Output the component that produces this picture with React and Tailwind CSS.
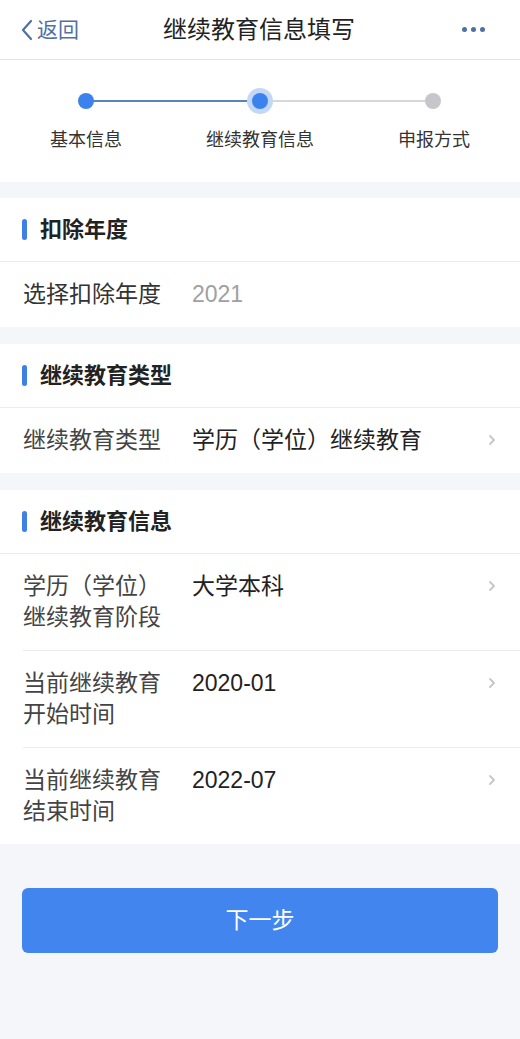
import React from 'react'

const FONT = { fontFamily: '"Liberation Sans", "Noto Sans CJK SC", sans-serif' }

function Chevron() {
  return (
    <svg width="8" height="12" viewBox="0 0 8 12" className="shrink-0">
      <path d="M2 2l4 4-4 4" fill="none" stroke="#c4c6ca" strokeWidth="1.8" strokeLinecap="round" strokeLinejoin="round" />
    </svg>
  )
}

function SectionHeader({ title }) {
  return (
    <div className="h-[64px] flex items-center pl-[22px] border-b border-[#ececee]">
      <span className="w-[5px] h-[21px] rounded-full bg-[#3f7fe6] mr-[13px]" />
      <span className="text-[22px] font-bold text-[#222]">{title}</span>
    </div>
  )
}

function Row({ label, value, valueClass = 'text-[#222]', arrow, divider, labelClass = 'text-[#444]' }) {
  return (
    <div className="pl-[23px]">
      <div className={`flex items-start w-full pr-[24px] py-[17px] ${divider ? 'border-t border-[#ececee]' : ''}`}>
        <div className={`w-[150px] shrink-0 text-[23px] leading-[31px] ${labelClass}`}>{label}</div>
        <div className={`ml-[19px] flex-1 text-[23px] leading-[31px] ${valueClass}`}>{value}</div>
        {arrow && (
          <div className="h-[31px] flex items-center -mt-[1px]">
            <Chevron />
          </div>
        )}
      </div>
    </div>
  )
}

function Stepper() {
  return (
    <div className="bg-white h-[122px] flex flex-col">
      <div className="relative h-[68px]">
        <div className="absolute top-[40px] left-[86px] w-[174px] h-[2px] bg-[#5d82b8]" />
        <div className="absolute top-[40px] left-[260px] w-[173px] h-[2px] bg-[#d6d7da]" />
        <div className="absolute top-[33px] left-[78px] w-[16px] h-[16px] rounded-full bg-[#3c82ee]" />
        <div className="absolute top-[28px] left-[247px] w-[26px] h-[26px] rounded-full bg-[#c3d8f6] flex items-center justify-center">
          <div className="w-[16px] h-[16px] rounded-full bg-[#3c82ee]" />
        </div>
        <div className="absolute top-[33px] left-[425px] w-[16px] h-[16px] rounded-full bg-[#c6c6cb]" />
      </div>
      <div className="grid grid-cols-[140px_140px_140px] gap-x-[34px] pl-[16px] text-[18px] text-[#333] leading-[24px]">
        <div className="text-center">基本信息</div>
        <div className="text-center">继续教育信息</div>
        <div className="text-center">申报方式</div>
      </div>
    </div>
  )
}

export default function App() {
  return (
    <div style={FONT} className="w-[520px] min-h-[1039px] bg-[#f4f6f9] flex flex-col">
      <div className="bg-white h-[60px] flex items-center px-[20px] border-b border-[#e3e4e6]">
        <div className="flex items-center w-[100px] text-[#4f70a6] text-[21px]">
          <svg width="14" height="22" viewBox="0 0 14 22" className="mr-[3px]">
            <path d="M11 2L3 11l8 9" fill="none" stroke="#4f70a6" strokeWidth="2.2" strokeLinecap="round" strokeLinejoin="round" />
          </svg>
          返回
        </div>
        <div className="flex-1 text-center text-[24px] text-[#222] -ml-[2px]">继续教育信息填写</div>
        <div className="w-[100px] flex justify-end items-center gap-[4px] pr-[15px]">
          <span className="w-[5px] h-[5px] rounded-full bg-[#4f70a6]" />
          <span className="w-[5px] h-[5px] rounded-full bg-[#4f70a6]" />
          <span className="w-[5px] h-[5px] rounded-full bg-[#4f70a6]" />
        </div>
      </div>

      <Stepper />

      <div className="h-[16px]" />

      <div className="bg-white">
        <SectionHeader title="扣除年度" />
        <Row label="选择扣除年度" value="2021" valueClass="text-[#a0a0a0]" labelClass="text-[#333]" />
      </div>

      <div className="h-[17px]" />

      <div className="bg-white">
        <SectionHeader title="继续教育类型" />
        <Row label="继续教育类型" value="学历（学位）继续教育" arrow />
      </div>

      <div className="h-[17px]" />

      <div className="bg-white">
        <SectionHeader title="继续教育信息" />
        <Row label="学历（学位）继续教育阶段" value="大学本科" arrow />
        <Row label="当前继续教育开始时间" value="2020-01" arrow divider />
        <Row label="当前继续教育结束时间" value="2022-07" arrow divider />
      </div>

      <div className="px-[22px] pt-[44px]">
        <button className="w-full h-[65px] rounded-[6px] bg-[#4285ef] text-white text-[23px]">下一步</button>
      </div>
    </div>
  )
}
